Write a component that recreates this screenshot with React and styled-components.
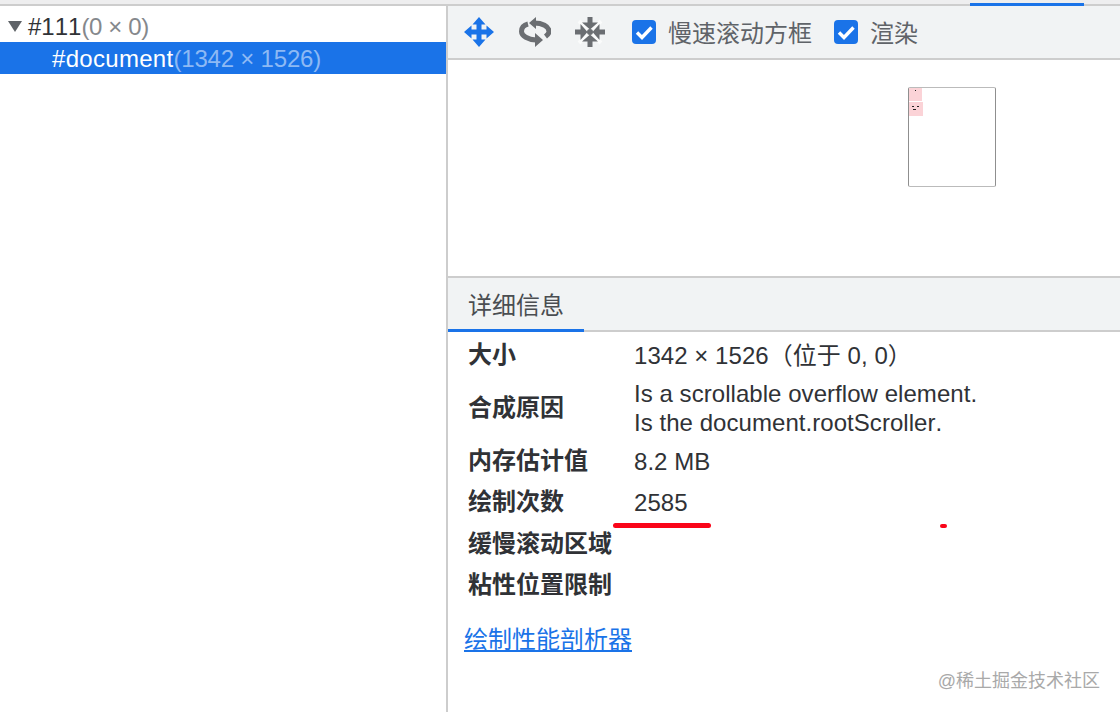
import React from 'react';
import styled, { createGlobalStyle } from 'styled-components';

const GlobalStyle = createGlobalStyle`
  html, body {
    margin: 0;
    padding: 0;
    background: #fff;
  }
  body {
    font-family: "Liberation Sans", "Noto Sans CJK SC", sans-serif;
    font-size: 24px;
    line-height: 30px;
    font-kerning: none;
    color: #303236;
  }
`;

const Page = styled.div`
  position: relative;
  width: 1120px;
  height: 712px;
  overflow: hidden;
  display: flex;
  flex-direction: column;
`;

const TopStrip = styled.div`
  height: 4px;
  flex: none;
  background: #eeeeef;
  border-bottom: 2px solid #cdcdcd;
  display: flex;
  justify-content: flex-end;
  padding-right: 36px;
`;

const TopTab = styled.div`
  width: 114px;
  height: 3px;
  margin-top: 3px;
  background: #1a73e8;
`;

const Split = styled.div`
  flex: 1;
  display: flex;
  min-height: 0;
`;

const TreePane = styled.div`
  width: 446px;
  flex: none;
  padding-top: 4px;
  border-right: 2px solid #cdcdcd;
`;

const TreeRow = styled.div`
  height: 32px;
  display: flex;
  align-items: center;
  padding-left: ${p => p.$indent}px;
  background: ${p => (p.$selected ? '#1a73e8' : 'transparent')};
  color: ${p => (p.$selected ? '#fff' : '#303236')};
  letter-spacing: ${p => (p.$selected ? '0.3px' : '0')};
  white-space: nowrap;
`;

const TreeText = styled.span`
  padding-top: 2px;
`;

const Arrow = styled.span`
  width: 0;
  height: 0;
  margin-right: 6px;
  border-left: 7px solid transparent;
  border-right: 7px solid transparent;
  border-top: 11px solid #5f6368;
`;

const Dim = styled.span`
  letter-spacing: ${p => (p.$selected ? '-0.2px' : '-0.35px')};
  color: ${p => (p.$selected ? '#8db9f4' : '#85888c')};
`;

const SidePane = styled.div`
  flex: 1;
  display: flex;
  flex-direction: column;
  min-width: 0;
`;

const Toolbar = styled.div`
  height: 52px;
  flex: none;
  display: flex;
  align-items: center;
  background: #f1f3f4;
  border-bottom: 2px solid #cdcdcd;
  padding-left: 15px;
`;

const ToolIcon = styled.svg`
  width: 32px;
  height: 32px;
  flex: none;
  margin-right: ${p => p.$gap}px;
`;

const CheckLabel = styled.label`
  display: flex;
  align-items: center;
  color: #5f6368;
  margin-right: 22px;
`;

const CheckText = styled.span`
  padding-top: 3px;
`;

const CheckBox = styled.svg`
  width: 24px;
  height: 24px;
  margin-right: 12px;
`;

const Viewport = styled.div`
  height: 216px;
  flex: none;
  position: relative;
  border-bottom: 2px solid #cdcdcd;
`;

const Minimap = styled.div`
  position: absolute;
  left: 460px;
  top: 27px;
  width: 86px;
  height: 98px;
  border: 1px solid #8f8f8f;
  border-top-color: #bbb;
  border-bottom-color: #bbb;
  border-radius: 2px;
`;

const MiniLayer = styled.div`
  position: absolute;
  left: 0;
  top: ${p => p.$top}px;
  width: ${p => p.$w}px;
  height: ${p => p.$h}px;
  background: #fbd3d7;
`;

const MiniDot = styled.i`
  position: absolute;
  left: ${p => p.$x}px;
  top: ${p => p.$y}px;
  width: ${p => p.$w}px;
  height: 1px;
  background: #222;
`;

const TabBar = styled.div`
  height: 52px;
  flex: none;
  display: flex;
  background: #f1f3f4;
  border-bottom: 2px solid #cdcdcd;
`;

const Tab = styled.div`
  width: 136px;
  height: 54px;
  box-sizing: border-box;
  padding: 4px 0 0 20px;
  display: flex;
  align-items: center;
  color: #4a4d51;
  border-bottom: 3px solid #1a73e8;
`;

const Details = styled.div`
  display: grid;
  grid-template-columns: 166px 1fr;
  padding-left: 20px;
`;

const Label = styled.div`
  font-weight: 700;
  display: flex;
  align-items: center;
  height: ${p => p.$h}px;
  color: #303236;
`;

const Value = styled.div`
  display: flex;
  flex-direction: column;
  justify-content: center;
  height: ${p => p.$h}px;
  line-height: 29px;
  letter-spacing: 0.05px;
  color: #303236;
  white-space: nowrap;
`;

const ProfilerLink = styled.a`
  display: inline-block;
  margin: 21px 0 0 16px;
  color: #1a73e8;
  text-decoration: underline;
  line-height: 34px;
  align-self: flex-start;
`;

const RedLine = styled.div`
  position: absolute;
  left: 613px;
  top: 523px;
  width: 98px;
  height: 5px;
  border-radius: 3px;
  background: #fa0519;
`;

const RedDot = styled.div`
  position: absolute;
  left: 940px;
  top: 524px;
  width: 7px;
  height: 4px;
  border-radius: 2px;
  background: #fa0519;
`;

const Watermark = styled.div`
  position: absolute;
  right: 20px;
  top: 669px;
  font-size: 18px;
  line-height: 24px;
  color: #a9a9a9;
  white-space: nowrap;
`;

const BLUE = '#1a73e8';
const GREY = '#6b6e72';

const PanIcon = () => (
  <ToolIcon viewBox="0 0 32 32" $gap={24}>
    <path
      fill={BLUE}
      d="M16 1l6.5 7.500h-4v5h5v-4L31 16l-7.500 6.500v-4h-5v5h4L16 31l-6.500-7.500h4v-5h-5v4L1 16l7.500-6.500v4h5v-5h-4z"
    />
  </ToolIcon>
);

const RotateIcon = () => (
  <ToolIcon viewBox="0 0 32 32" $gap={23}>
    <g fill="none" stroke={GREY} strokeWidth="5">
      <path d="M15 7c8 0 15 3 15 8.500 0 2-1.500 3.500-3.500 5" />
      <path d="M9 8c-4 1-6.500 4-6.500 7.500C2.500 20 9 23.500 17 24" />
    </g>
    <path fill={GREY} d="M10 7l7-6v12zM24 24l-8-7v14z" />
  </ToolIcon>
);

const ZoomIcon = () => (
  <ToolIcon viewBox="0 0 32 32" $gap={26}>
    <path d="M5 5l22 22M27 5L5 27" stroke="#fff" strokeWidth="4" opacity=".7" />
    {[0, 90, 180, 270].map(deg => (
      <path
        key={deg}
        fill={GREY}
        transform={`rotate(${deg} 16 16)`}
        d="M13.500 1h5v5.500H24L16 13.500 8 6.500h5.500z"
      />
    ))}
    <circle cx="16" cy="16" r="3" fill={GREY} />
  </ToolIcon>
);

const Check = () => (
  <CheckBox viewBox="0 0 24 24">
    <rect width="24" height="24" rx="4" fill={BLUE} />
    <path d="M5 12.500l5 5L19.500 7.500" fill="none" stroke="#fff" strokeWidth="3.400" />
  </CheckBox>
);

const rows = [
  { label: '大小', h: 46, value: ['1342 × 1526（位于 0, 0）'] },
  { label: '合成原因', h: 60, value: ['Is a scrollable overflow element.', 'Is the document.rootScroller.'] },
  { label: '内存估计值', h: 46, value: ['8.2 MB'] },
  { label: '绘制次数', h: 36, value: ['2585'] },
  { label: '缓慢滚动区域', h: 48, value: [] },
  { label: '粘性位置限制', h: 34, value: [] },
];

export default function App() {
  return (
    <Page>
      <GlobalStyle />
      <TopStrip>
        <TopTab />
      </TopStrip>
      <Split>
        <TreePane>
          <TreeRow $indent={8}>
            <Arrow />
            <TreeText>
              #111<Dim>(0 × 0)</Dim>
            </TreeText>
          </TreeRow>
          <TreeRow $indent={52} $selected>
            <TreeText>
              #document<Dim $selected>(1342 × 1526)</Dim>
            </TreeText>
          </TreeRow>
        </TreePane>
        <SidePane>
          <Toolbar>
            <PanIcon />
            <RotateIcon />
            <ZoomIcon />
            <CheckLabel>
              <Check />
              <CheckText>慢速滚动方框</CheckText>
            </CheckLabel>
            <CheckLabel>
              <Check />
              <CheckText>渲染</CheckText>
            </CheckLabel>
          </Toolbar>
          <Viewport>
            <Minimap>
              <MiniLayer $top={0} $w={13} $h={13} />
              <MiniLayer $top={14} $w={14} $h={14} />
              <MiniDot $x={6} $y={2} $w={1} />
              <MiniDot $x={3} $y={18} $w={2} />
              <MiniDot $x={8} $y={18} $w={2} />
              <MiniDot $x={4} $y={21} $w={3} />
            </Minimap>
          </Viewport>
          <TabBar>
            <Tab>详细信息</Tab>
          </TabBar>
          <Details>
            {rows.map(row => (
              <React.Fragment key={row.label}>
                <Label $h={row.h}>{row.label}</Label>
                <Value $h={row.h}>
                  {row.value.map(line => (
                    <span key={line}>{line}</span>
                  ))}
                </Value>
              </React.Fragment>
            ))}
          </Details>
          <ProfilerLink>绘制性能剖析器</ProfilerLink>
        </SidePane>
      </Split>
      <RedLine />
      <RedDot />
      <Watermark>@稀土掘金技术社区</Watermark>
    </Page>
  );
}
